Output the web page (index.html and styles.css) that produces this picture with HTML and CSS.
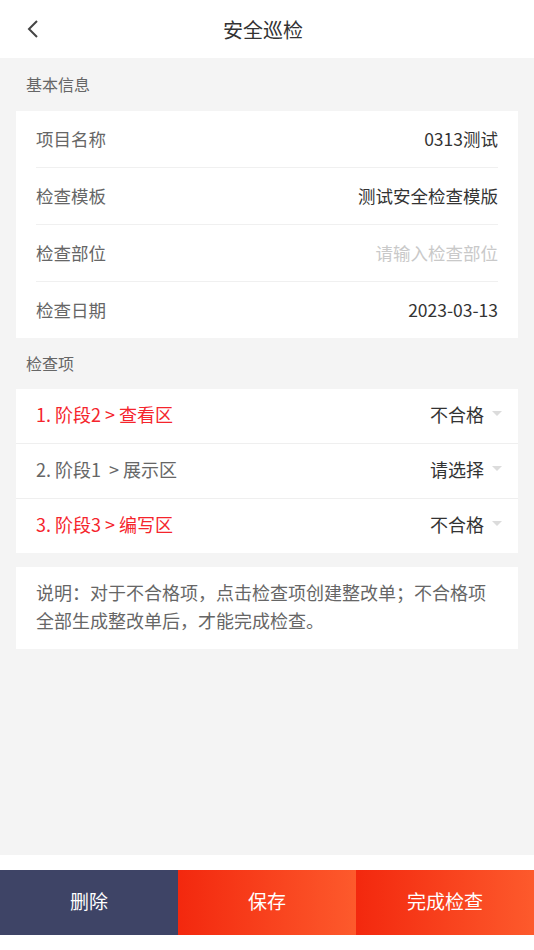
FILE: index.html
```html
<!DOCTYPE html>
<html lang="zh-CN">
<head>
<meta charset="utf-8">
<title>安全巡检</title>
<link rel="stylesheet" href="styles.css">
</head>
<body>
<div class="page">
  <header class="nav">
    <span class="back">
      <svg width="14" height="20" viewBox="0 0 14 20"><path d="M11 2 L3 10 L11 18" fill="none" stroke="#444" stroke-width="2"/></svg>
    </span>
    <h1 class="title">安全巡检</h1>
  </header>
  <main class="main">
    <div class="section-title">基本信息</div>
    <div class="card info">
      <div class="info-row"><span class="label">项目名称</span><span class="value">0313测试</span></div>
      <div class="info-row"><span class="label">检查模板</span><span class="value">测试安全检查模版</span></div>
      <div class="info-row"><span class="label">检查部位</span><span class="value placeholder">请输入检查部位</span></div>
      <div class="info-row"><span class="label">检查日期</span><span class="value">2023-03-13</span></div>
    </div>
    <div class="section-title section-title-2">检查项</div>
    <div class="card checks">
      <div class="check-row"><span class="check-name fail">1. 阶段2 &gt; 查看区</span><span class="check-status">不合格<i class="caret"></i></span></div>
      <div class="check-row"><span class="check-name">2. 阶段1&nbsp; &gt; 展示区</span><span class="check-status">请选择<i class="caret"></i></span></div>
      <div class="check-row"><span class="check-name fail">3. 阶段3 &gt; 编写区</span><span class="check-status">不合格<i class="caret"></i></span></div>
    </div>
    <div class="card note">说明：对于不合格项，点击检查项创建整改单；不合格项全部生成整改单后，才能完成检查。</div>
  </main>
  <footer class="footer">
    <button class="btn btn-delete">删除</button>
    <button class="btn btn-primary">保存</button>
    <button class="btn btn-primary">完成检查</button>
  </footer>
</div>
</body>
</html>
```
FILE: styles.css
```css
* { box-sizing: border-box; margin: 0; padding: 0; }
html, body { width: 534px; height: 950px; }
body {
  font-family: "Noto Sans CJK SC", "Noto Sans", "Liberation Sans", sans-serif;
  background: #f4f4f4;
  color: #333;
}
.page { display: flex; flex-direction: column; height: 950px; }
.nav {
  height: 58px;
  background: #fff;
  display: flex;
  align-items: center;
  justify-content: center;
  position: relative;
}
.back { position: absolute; left: 26px; top: 19px; display: flex; }
.title { font-size: 20px; font-weight: normal; color: #333; margin-right: 8px; }
.main { flex: 1; background: #f4f4f4; padding: 0 16px; }
.section-title {
  height: 53px;
  line-height: 52px;
  padding-left: 10px;
  font-size: 16px;
  color: #666;
}
.section-title-2 { height: 51px; line-height: 50px; }
.card { background: #fff; }
.info { padding: 0 20px; }
.info-row {
  height: 57px;
  display: flex;
  align-items: center;
  justify-content: space-between;
  border-bottom: 1px solid #f0f0f0;
  font-size: 17.5px;
  padding-bottom: 2px;
}
.info-row:last-child { border-bottom: none; height: 56px; }
.label { color: #666; }
.value { color: #333; }
.placeholder { color: #c9c9c9; }
.checks { display: flex; flex-direction: column; }
.check-row {
  height: 55px;
  padding: 0 16px 5px 20px;
  display: flex;
  align-items: center;
  justify-content: space-between;
  border-bottom: 1.5px solid #efefef;
  font-size: 18px;
}
.check-row:last-child { border-bottom: none; height: 54px; }
.check-name { color: #666; }
.check-name.fail { color: #f5242c; }
.check-status { color: #333; display: flex; align-items: center; }
.caret {
  display: inline-block;
  width: 0; height: 0;
  margin-left: 8px;
  border-left: 5px solid transparent;
  border-right: 5px solid transparent;
  border-top: 5px solid #dcdcdc;
}
.note {
  margin-top: 14px;
  padding: 11px 24px 15px 20px;
  font-size: 18px;
  line-height: 28px;
  color: #666;
}
.footer {
  height: 95px;
  background: #fff;
  padding: 15px 0;
  display: flex;
}
.btn {
  flex: 1;
  border: none;
  font-family: inherit;
  font-size: 19px;
  color: #fff;
  padding-bottom: 4px;
}
.btn-delete { background: #3e4466; }
.btn-primary { background: linear-gradient(90deg, #f3280e 0%, #fd5a2c 100%); }
```
